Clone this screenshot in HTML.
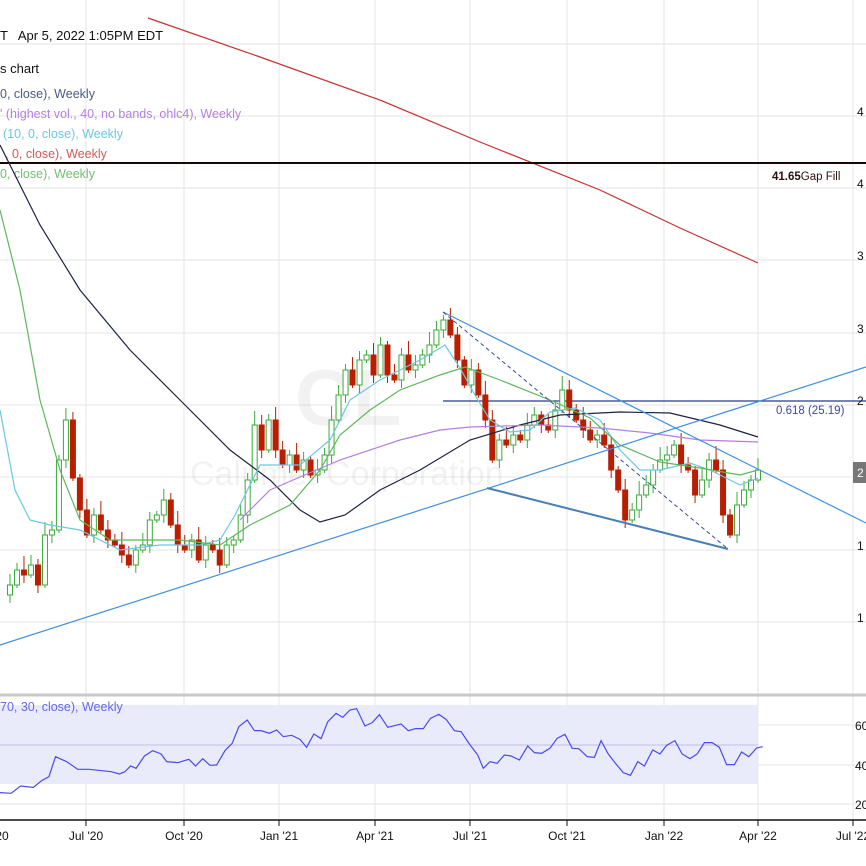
<!DOCTYPE html><html><head><meta charset="utf-8"><style>
body{margin:0;width:866px;height:866px;overflow:hidden;background:#fff;font-family:"Liberation Sans",sans-serif}
svg{position:absolute;left:0;top:0}
</style></head><body>
<svg id="s" width="866" height="866" viewBox="0 0 866 866" xmlns="http://www.w3.org/2000/svg" font-family="Liberation Sans, sans-serif">
<g stroke="#e6e6e6" stroke-width="1">
<line x1="86" y1="0" x2="86" y2="820"/><line x1="184" y1="0" x2="184" y2="820"/><line x1="279" y1="0" x2="279" y2="820"/><line x1="375" y1="0" x2="375" y2="820"/><line x1="470" y1="0" x2="470" y2="820"/><line x1="567" y1="0" x2="567" y2="820"/><line x1="664" y1="0" x2="664" y2="820"/><line x1="758" y1="0" x2="758" y2="820"/><line x1="853" y1="0" x2="853" y2="820"/>
<line x1="0" y1="44" x2="866" y2="44"/><line x1="0" y1="116" x2="866" y2="116"/><line x1="0" y1="188" x2="866" y2="188"/><line x1="0" y1="260" x2="866" y2="260"/><line x1="0" y1="333" x2="866" y2="333"/><line x1="0" y1="405" x2="866" y2="405"/><line x1="0" y1="477" x2="866" y2="477"/><line x1="0" y1="550" x2="866" y2="550"/><line x1="0" y1="622" x2="866" y2="622"/>
<line x1="0" y1="725" x2="866" y2="725"/><line x1="0" y1="765" x2="866" y2="765"/><line x1="0" y1="804" x2="866" y2="804"/>
</g>
<text x="295" y="425" font-size="80" font-weight="bold" fill="#000" fill-opacity="0.05">CL</text>
<text x="190" y="485" font-size="34" fill="#000" fill-opacity="0.05">Calumet Corporation</text>
<text x="0" y="40" font-size="13" fill="#111">T &#160; Apr 5, 2022 1:05PM EDT</text>
<text x="0" y="73" font-size="13" fill="#111">s chart</text>
<text x="0" y="98" font-size="12.5" fill="#4a5a85">0, close), Weekly</text>
<text x="0" y="118" font-size="12.5" fill="#b57ee0">' (highest vol., 40, no bands, ohlc4), Weekly</text>
<text x="3" y="138" font-size="12.5" fill="#6cc6e2">(10, 0, close), Weekly</text>
<text x="5" y="158" font-size="12.5" fill="#d05a5a">, 0, close), Weekly</text>
<text x="0" y="178" font-size="12.5" fill="#72bf72">0, close), Weekly</text>
<polyline fill="none" stroke="#c83030" stroke-width="1.2" points="148,18 260,57 380,100 480,142 600,190 680,228 758,263"/>
<line x1="0" y1="163" x2="866" y2="163" stroke="#1a0505" stroke-width="2"/>
<text x="772" y="180" font-size="11.5" fill="#2a1010"><tspan font-weight="bold">41.65</tspan>Gap Fill</text>
<line x1="443" y1="401" x2="866" y2="401" stroke="#283a8c" stroke-width="1.2"/>
<text x="776" y="414" font-size="11.5" fill="#3a4a9a">0.618 (25.19)</text>
<g id="c"></g>
<polyline fill="none" stroke="#1c2340" stroke-width="1.2" points="0,145 40,225 80,290 130,350 180,400 230,450 270,480 300,510 320,522 345,515 380,490 420,470 470,440 520,425 560,415 620,412 670,413 720,425 758,437"/>
<polyline fill="none" stroke="#b57ee0" stroke-width="1.2" points="240,520 270,490 300,477 340,460 400,440 440,430 470,427 540,425 600,428 650,433 700,440 758,442"/>
<polyline fill="none" stroke="#6cc6e2" stroke-width="1.2" points="0,410 15,490 30,520 50,525 80,530 120,550 160,545 200,545 220,540 235,515 260,465 300,465 330,440 350,400 380,380 420,360 445,345 460,368 475,395 490,420 510,432 530,430 550,412 575,408 600,420 620,450 640,470 660,470 690,463 710,470 740,485 758,478"/>
<polyline fill="none" stroke="#5cb85c" stroke-width="1.2" points="0,210 20,290 40,400 60,470 80,520 110,540 140,540 180,540 220,545 250,525 290,505 320,470 340,435 370,410 400,390 440,375 465,367 500,380 550,400 590,418 620,445 660,462 700,468 740,475 758,470"/>
<line x1="0" y1="645" x2="866" y2="367" stroke="#3d8fe0" stroke-width="1.2"/>
<line x1="443" y1="312" x2="866" y2="523" stroke="#3d8fe0" stroke-width="1.2"/>
<line x1="487" y1="488" x2="728" y2="549" stroke="#4a80b0" stroke-width="2"/>
<line x1="443" y1="312" x2="728" y2="549" stroke="#3a4a9a" stroke-width="1" stroke-dasharray="4,3"/>
<rect x="853" y="462" width="13" height="21" fill="#777"/>
<text x="857" y="477" font-size="12" fill="#fff">2</text>
<g font-size="12" fill="#111"><text x="857" y="116">4</text><text x="857" y="188">4</text><text x="857" y="260">3</text><text x="857" y="333">3</text><text x="857" y="405">2</text><text x="857" y="550">1</text><text x="857" y="622">1</text></g>
<line x1="0" y1="695" x2="866" y2="695" stroke="#c8c8c8" stroke-width="3"/>
<rect x="0" y="705" width="758" height="79" fill="#e9ebfb"/>
<line x1="0" y1="745" x2="758" y2="745" stroke="#d6d3f5" stroke-width="2"/>
<text x="0" y="711" font-size="12.5" fill="#6666ee">70, 30, close), Weekly</text>
<g transform="translate(0,680) scale(0.5555,0.3333)"><polyline fill="none" stroke="#4a4af0" stroke-width="1.2" vector-effect="non-scaling-stroke" points="0,338 20,340 37,318 60,322 75,302 88,290 100,230 120,245 140,268 160,268 200,275 215,282 225,275 235,258 245,265 260,228 275,212 290,222 300,245 320,248 340,238 352,258 365,236 378,256 390,255 405,212 418,190 430,140 445,120 458,152 470,152 485,160 498,150 510,170 525,166 540,178 552,202 565,162 578,176 590,125 605,100 617,112 630,90 642,86 657,138 670,128 683,104 698,142 722,132 735,152 748,146 762,146 775,115 790,103 803,118 818,152 830,155 845,192 860,225 870,265 882,245 895,250 908,225 920,228 935,240 950,198 962,218 975,220 990,205 1003,175 1017,163 1030,205 1042,206 1057,230 1070,232 1082,182 1095,222 1108,250 1122,278 1135,286 1148,245 1160,258 1175,210 1188,222 1200,196 1215,182 1228,222 1242,236 1255,222 1268,188 1282,188 1295,202 1308,254 1322,254 1335,216 1348,230 1362,204 1373,200"/></g>
<g font-size="12" fill="#111"><text x="855" y="730">60</text><text x="855" y="770">40</text><text x="855" y="809">20</text></g>
<line x1="0" y1="820" x2="866" y2="820" stroke="#111" stroke-width="1.5"/>
<g stroke="#111"><line x1="86" y1="820" x2="86" y2="826"/><line x1="184" y1="820" x2="184" y2="826"/><line x1="279" y1="820" x2="279" y2="826"/><line x1="375" y1="820" x2="375" y2="826"/><line x1="470" y1="820" x2="470" y2="826"/><line x1="567" y1="820" x2="567" y2="826"/><line x1="664" y1="820" x2="664" y2="826"/><line x1="758" y1="820" x2="758" y2="826"/><line x1="853" y1="820" x2="853" y2="826"/></g>
<g font-size="12" fill="#111" text-anchor="middle"><text x="2" y="840">20</text><text x="86" y="840">Jul '20</text><text x="184" y="840">Oct '20</text><text x="279" y="840">Jan '21</text><text x="375" y="840">Apr '21</text><text x="470" y="840">Jul '21</text><text x="567" y="840">Oct '21</text><text x="664" y="840">Jan '22</text><text x="758" y="840">Apr '22</text><text x="853" y="840">Jul '22</text></g>
</svg>
<script>
var c=[595,585,570,575,565,585,535,530,460,420,478,510,535,515,530,540,545,555,565,550,545,520,515,500,525,545,550,540,560,545,550,565,545,540,515,480,425,450,420,450,465,455,470,460,475,470,455,420,395,370,385,360,355,375,345,375,380,355,370,365,355,345,330,320,335,360,385,370,395,420,460,440,445,435,440,425,415,425,430,410,390,410,420,430,440,435,445,470,490,520,510,495,485,470,460,455,445,465,470,495,480,460,470,515,535,505,490,480,470];
var g=document.getElementById('c'),h='';var n=c.length,st=755/(n-1);
for(var i=1;i<n;i++){var x=3+i*st,o=c[i-1],cl=c[i];var up=cl<o;var t=Math.min(o,cl),b=Math.max(o,cl);if(b-t<2)b=t+2;
var hi=t-(4+(i*7)%11),lo=b+(3+(i*5)%10);var col=up?'#3aaa3a':'#b81e00';
h+='<line x1="'+x+'" y1="'+hi+'" x2="'+x+'" y2="'+lo+'" stroke="'+col+'" stroke-width="1"/>';
h+='<rect x="'+(x-2.5)+'" y="'+t+'" width="5" height="'+(b-t)+'" fill="'+(up?'#fff':col)+'" stroke="'+col+'" stroke-width="1"/>';}
g.innerHTML=h;
</script>
</body></html>
